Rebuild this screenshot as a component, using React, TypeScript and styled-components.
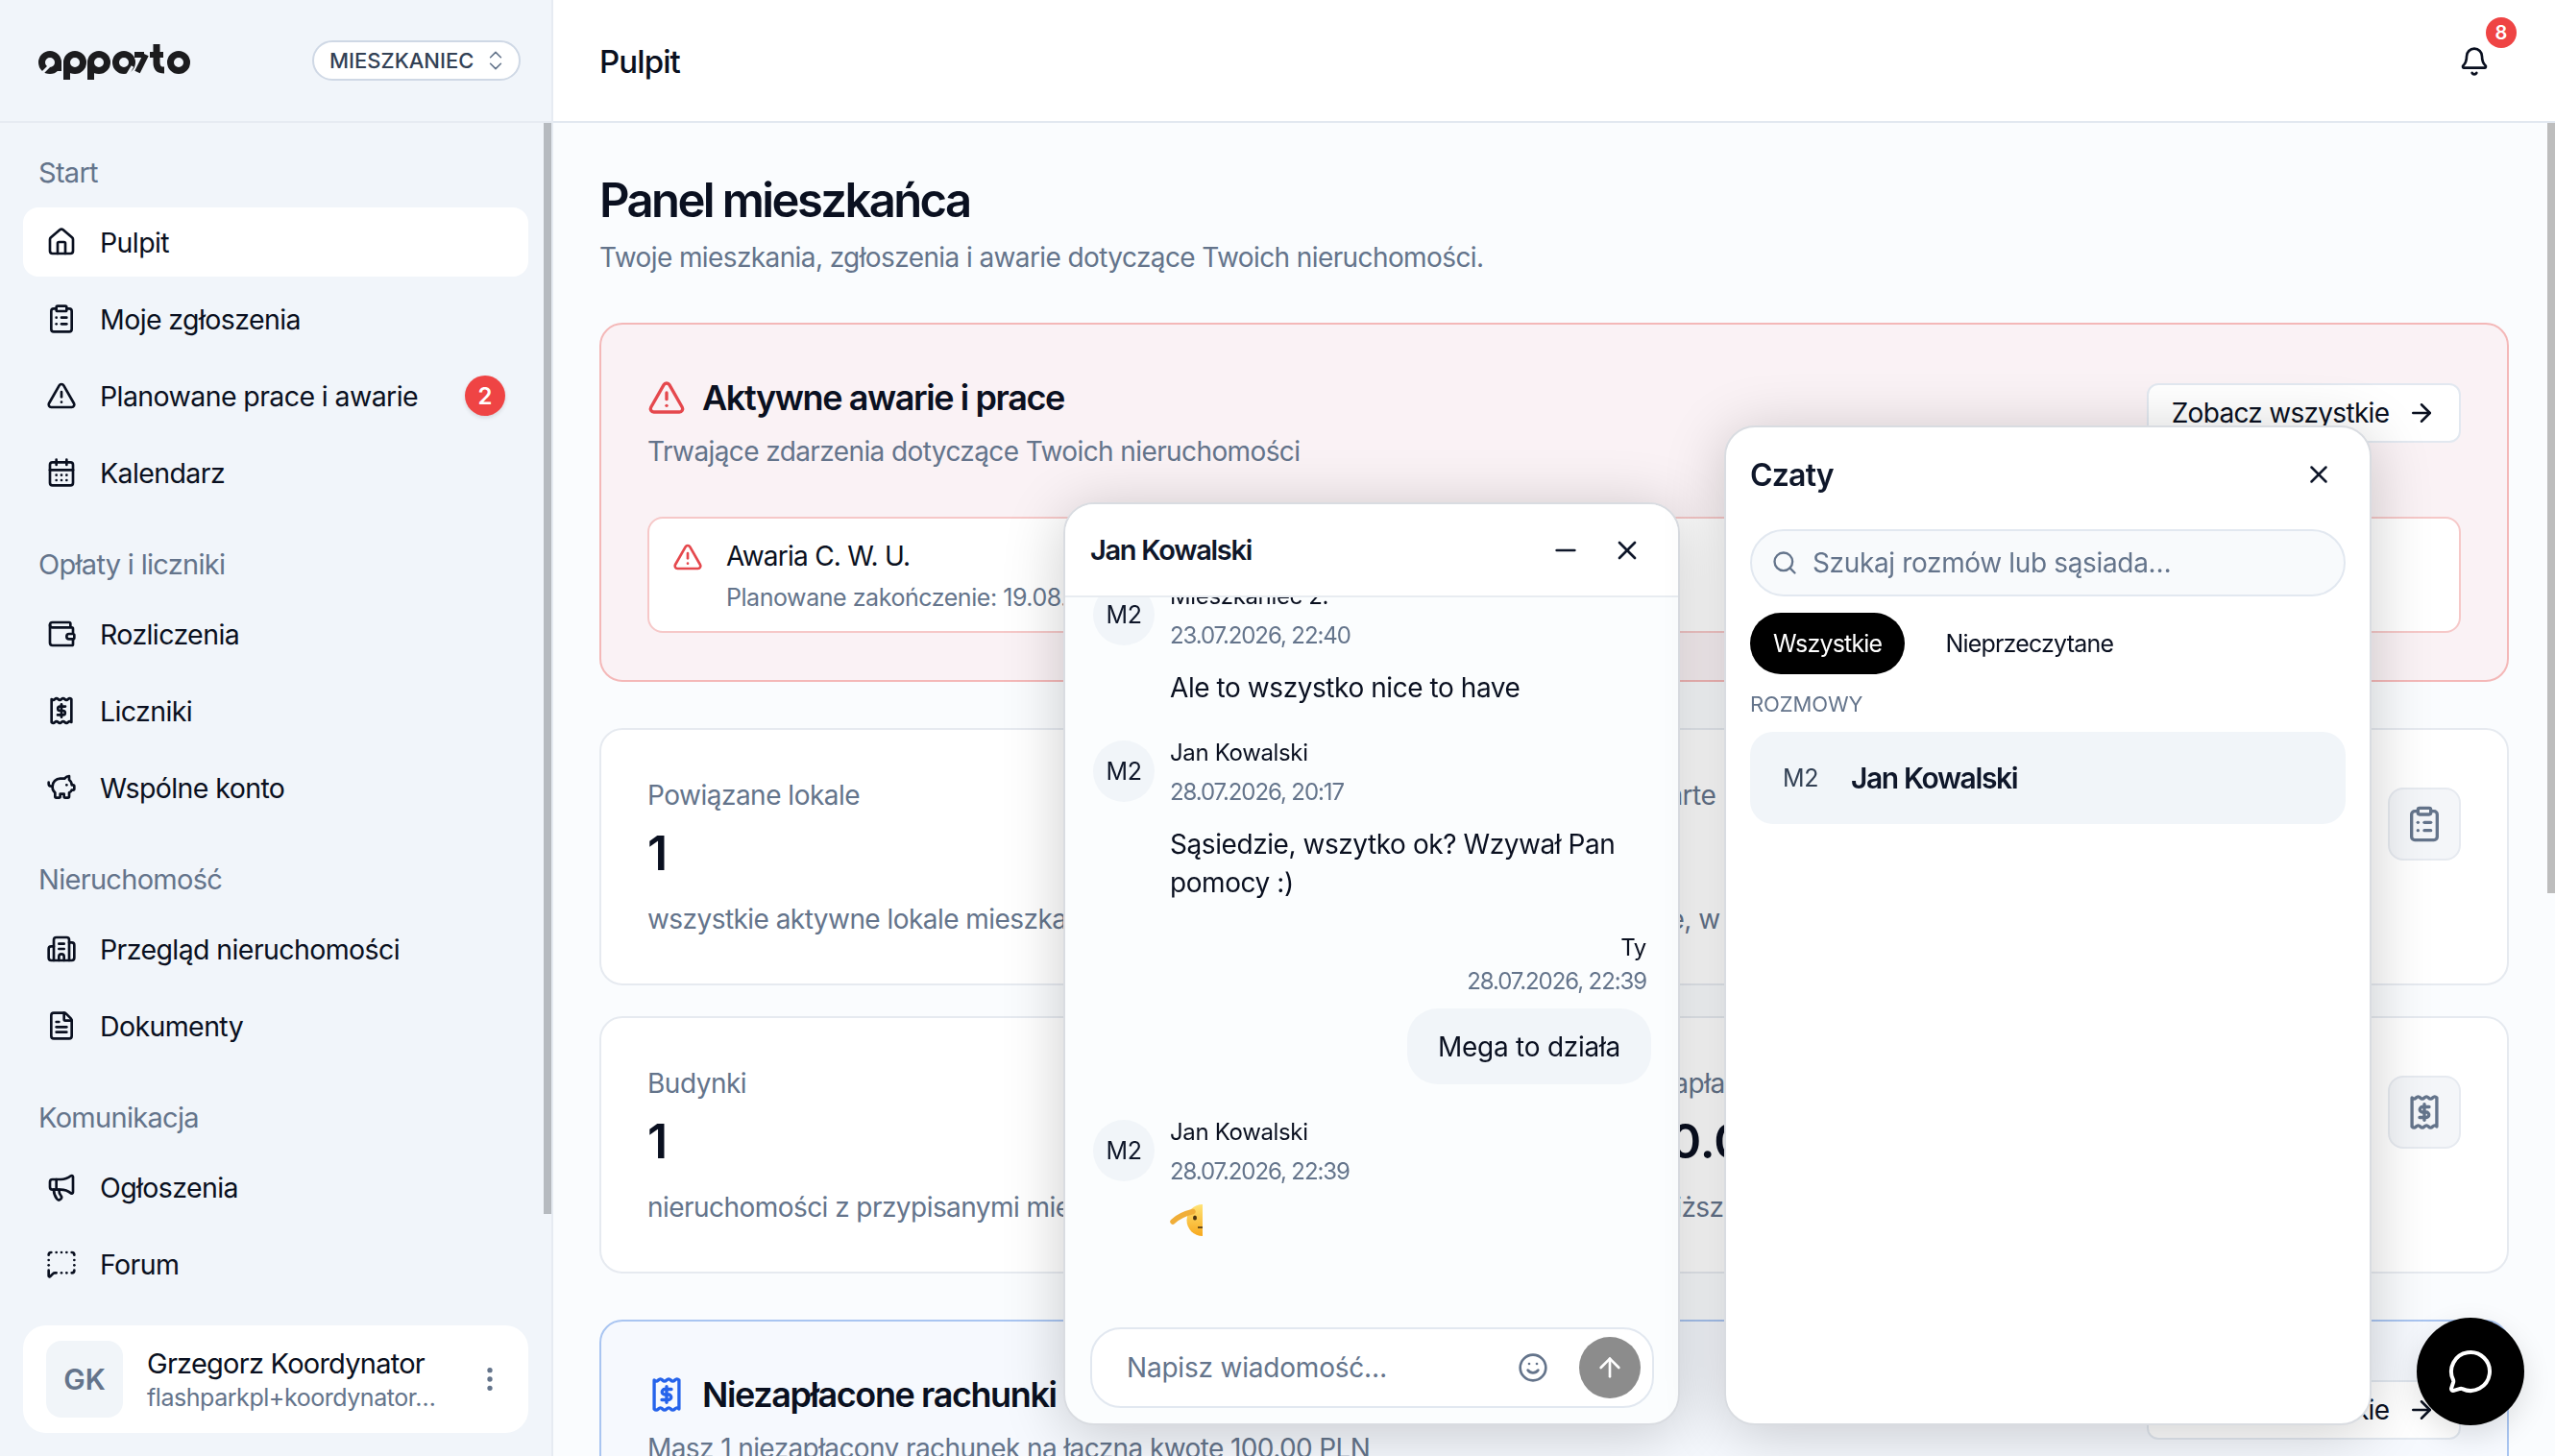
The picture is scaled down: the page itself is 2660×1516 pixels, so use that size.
import styled, { createGlobalStyle } from "styled-components";
import {
  ArrowRight,
  ArrowUp,
  Bell,
  Building2,
  CalendarDays,
  ChevronsUpDown,
  ClipboardList,
  EllipsisVertical,
  FileText,
  House,
  Megaphone,
  MessageCircle,
  MessageSquareDashed,
  Minus,
  PiggyBank,
  Search,
  Smile,
  TriangleAlert,
  Wallet,
  X,
} from "lucide-react";
import type { ReactNode } from "react";

const ink = "#0a1020";
const muted = "#64748b";

const GlobalStyle = createGlobalStyle`
  * { box-sizing: border-box; }
  html, body { margin: 0; padding: 0; height: 100%; }
  body {
    font-family: Inter, "Liberation Sans", sans-serif;
    color: ${ink};
    background: #fafcfe;
    overflow: hidden;
  }
`;

const Shell = styled.div`
  display: grid;
  grid-template-columns: 576px 1fr;
  height: 100vh;
  overflow: hidden;
  position: relative;
`;

/* sidebar */
const Side = styled.aside`
  display: flex;
  flex-direction: column;
  background: #f1f5fa;
  border-right: 2px solid #e6ebf2;
  position: relative;
  min-height: 0;
`;
const SideTop = styled.div`
  height: 128px;
  flex: none;
  display: flex;
  align-items: center;
  justify-content: space-between;
  padding: 0 32px 0 40px;
  border-bottom: 2px solid #e6ebf2;
`;
const LogoBox = styled.div`
  display: flex;
  padding-top: 4px;
`;
const RolePill = styled.button`
  display: flex;
  align-items: center;
  gap: 10px;
  height: 42px;
  width: 217px;
  padding: 0 0 0 16px;
  background: #fff;
  border: 2px solid #cfd8e5;
  border-radius: 21px;
  font: 500 22px Inter, sans-serif;
  letter-spacing: 0;
  color: #334155;
`;
const SideScroll = styled.div`
  position: absolute;
  top: 128px;
  right: 0;
  width: 8px;
  height: 1136px;
  background: #b6babf;
`;
const Nav = styled.nav`
  flex: 1;
  display: flex;
  flex-direction: column;
  gap: 38px;
  padding: 30px 24px 0;
`;
const NavGroup = styled.div`
  display: flex;
  flex-direction: column;
  gap: 8px;
`;
const GroupLabel = styled.div`
  font-size: 29px;
  line-height: 44px;
  color: ${muted};
  padding-left: 16px;
  margin-bottom: 6px;
  letter-spacing: -0.7px;
`;
const NavItem = styled.a<{ $active?: boolean }>`
  display: flex;
  align-items: center;
  gap: 24px;
  height: 72px;
  padding: 0 24px;
  border-radius: 16px;
  font-size: 28.5px;
  letter-spacing: -0.6px;
  background: ${(p) => (p.$active ? "#fff" : "transparent")};
  color: ${ink};
  svg {
    flex: none;
  }
`;
const NavBadge = styled.span`
  margin-left: auto;
  width: 42px;
  height: 42px;
  border-radius: 50%;
  background: #ef4444;
  color: #fff;
  display: flex;
  align-items: center;
  justify-content: center;
  font-size: 24px;
  font-weight: 600;
  letter-spacing: 0;
  box-shadow: 0 2px 4px rgba(0, 0, 0, 0.12);
`;
const UserCard = styled.div`
  flex: none;
  margin: 0 24px 24px;
  height: 112px;
  display: flex;
  align-items: center;
  padding: 0 24px;
  background: #fff;
  border-radius: 24px;
`;
const UserAvatar = styled.div`
  width: 80px;
  height: 80px;
  flex: none;
  border-radius: 16px;
  background: #f1f5f9;
  color: ${muted};
  display: flex;
  align-items: center;
  justify-content: center;
  font-size: 30px;
  font-weight: 600;
`;
const UserText = styled.div`
  margin-left: 25px;
  flex: 1;
  min-width: 0;
`;
const UserName = styled.div`
  font-size: 29px;
  line-height: 38px;
  letter-spacing: -0.75px;
`;
const UserMail = styled.div`
  font-size: 25px;
  line-height: 32px;
  color: ${muted};
  letter-spacing: -0.45px;
`;

/* main column */
const Main = styled.main`
  display: flex;
  flex-direction: column;
  min-width: 0;
  min-height: 0;
  position: relative;
`;
const TopBar = styled.header`
  height: 128px;
  flex: none;
  display: flex;
  align-items: center;
  justify-content: space-between;
  padding: 2px 68px 0 48px;
  background: #fff;
  border-bottom: 2px solid #e2e8f0;
`;
const TopTitle = styled.div`
  font-size: 33px;
  font-weight: 500;
  letter-spacing: -0.9px;
`;
const BellWrap = styled.div`
  position: relative;
  display: flex;
  width: 32px;
  height: 32px;
`;
const BellBadge = styled.span`
  position: absolute;
  top: -30px;
  left: 28px;
  width: 32px;
  height: 32px;
  border-radius: 50%;
  background: #ef4444;
  color: #fff;
  font-size: 20px;
  font-weight: 600;
  display: flex;
  align-items: center;
  justify-content: center;
`;
const PageScroll = styled.div`
  position: absolute;
  top: 128px;
  right: 0;
  width: 8px;
  height: 802px;
  background: #bdbdbd;
`;
const Content = styled.div`
  flex: 1;
  min-height: 0;
  overflow: hidden;
  padding: 49px 48px 0;
`;
const PageTitle = styled.h1`
  margin: 0;
  font-size: 49px;
  line-height: 64px;
  font-weight: 600;
  letter-spacing: -2.6px;
`;
const PageSub = styled.p`
  margin: 5px 0 46px;
  font-size: 28px;
  line-height: 44px;
  color: ${muted};
  letter-spacing: -0.6px;
`;
const Panel = styled.section<{ $tone: "red" | "blue" }>`
  padding: 48px 48px 49px;
  border-radius: 24px;
  border: 2px solid ${(p) => (p.$tone === "red" ? "#f4b8b8" : "#a9c5f1")};
  background: ${(p) => (p.$tone === "red" ? "#faf2f5" : "#f6f9fe")};
  margin-bottom: 48px;
`;
const PanelHead = styled.div`
  display: flex;
  justify-content: space-between;
  align-items: flex-start;
`;
const PanelTitle = styled.h2<{ $tone: "red" | "blue" }>`
  margin: 0;
  display: flex;
  align-items: center;
  gap: 17px;
  font-size: 36px;
  line-height: 56px;
  font-weight: 600;
  letter-spacing: -1.4px;
  svg {
    color: ${(p) => (p.$tone === "red" ? "#e5484d" : "#2563eb")};
    flex: none;
  }
`;
const PanelSub = styled.p`
  margin: 6px 0 0;
  font-size: 28px;
  line-height: 44px;
  color: ${muted};
  letter-spacing: -0.6px;
`;
const LinkButton = styled.button`
  flex: none;
  margin: 13px 0 0;
  height: 62px;
  width: 327px;
  display: flex;
  align-items: center;
  justify-content: center;
  gap: 19px;
  background: #fff;
  border: 2px solid #e2e8f0;
  border-radius: 12px;
  font: 400 28px Inter, sans-serif;
  letter-spacing: -0.7px;
  color: ${ink};
`;
const AlertRow = styled.div`
  margin-top: 46px;
  height: 121px;
  display: flex;
  align-items: flex-start;
  gap: 24px;
  padding: 19px 24px;
  border-radius: 16px;
  border: 2px solid #f6c8c8;
  background: #fff;
  svg {
    margin-top: 5px;
    flex: none;
  }
`;
const AlertName = styled.div`
  font-size: 28px;
  line-height: 40px;
  letter-spacing: -0.75px;
`;
const AlertMeta = styled.div`
  margin-top: 5px;
  font-size: 25px;
  line-height: 36px;
  color: ${muted};
  letter-spacing: -0.45px;
  white-space: nowrap;
`;
const StatGrid = styled.div`
  display: grid;
  grid-template-columns: 1fr 1fr;
  gap: 32px;
  margin-bottom: 48px;
`;
const StatCard = styled.div`
  height: 268px;
  padding: 46px 48px;
  display: flex;
  justify-content: space-between;
  border: 2px solid #e6eaf0;
  border-radius: 24px;
  background: #fff;
`;
const StatText = styled.div`
  min-width: 0;
  white-space: nowrap;
`;
const StatLabel = styled.div`
  font-size: 28px;
  line-height: 44px;
  color: ${muted};
  letter-spacing: -0.5px;
`;
const StatValue = styled.div`
  margin-top: 8px;
  font-size: 50px;
  line-height: 60px;
  font-weight: 600;
`;
const StatNote = styled.div`
  margin-top: 17px;
  font-size: 28px;
  line-height: 44px;
  color: ${muted};
  letter-spacing: -0.55px;
`;
const StatIcon = styled.div`
  flex: none;
  width: 76px;
  height: 76px;
  margin-top: 14px;
  display: flex;
  align-items: center;
  justify-content: center;
  border: 2px solid #e6eaf0;
  border-radius: 16px;
  background: #f4f6f9;
  color: ${muted};
`;

/* floating chat windows */
const ChatWindow = styled.div`
  position: fixed;
  left: 1107px;
  top: 523px;
  width: 642px;
  height: 961px;
  display: flex;
  flex-direction: column;
  overflow: hidden;
  border: 2px solid #d9dce1;
  border-radius: 32px;
  background: #fbfdfe;
  box-shadow: 0 8px 64px rgba(0, 0, 0, 0.2);
`;
const ChatHead = styled.div`
  flex: none;
  height: 97px;
  display: flex;
  align-items: center;
  padding: 0 37px 0 26px;
  background: #fff;
  border-bottom: 2px solid #e8ecf1;
  position: relative;
  z-index: 1;
`;
const ChatName = styled.div`
  flex: 1;
  font-size: 29px;
  font-weight: 600;
  letter-spacing: -1.3px;
  color: #0f172a;
`;
const HeadActions = styled.div`
  display: flex;
  gap: 32px;
  color: #0f172a;
`;
const MessageList = styled.div`
  flex: 1;
  min-height: 0;
  overflow: hidden;
`;
const MessageScroll = styled.div`
  margin-top: -14px;
  padding: 0 28px 0 29px;
  display: flex;
  flex-direction: column;
  gap: 35px;
`;
const Incoming = styled.div`
  display: grid;
  grid-template-columns: 64px 1fr;
  column-gap: 16px;
`;
const Avatar = styled.div`
  width: 64px;
  height: 64px;
  border-radius: 50%;
  background: #f1f5f9;
  display: flex;
  align-items: center;
  justify-content: center;
  font-size: 25px;
  letter-spacing: -0.3px;
  color: #0f172a;
`;
const Sender = styled.div`
  font-size: 24px;
  line-height: 26px;
  letter-spacing: -0.35px;
`;
const Stamp = styled.div`
  margin-top: 12px;
  font-size: 24px;
  line-height: 32px;
  letter-spacing: -1.1px;
  color: ${muted};
`;
const Body = styled.div`
  margin-top: 18px;
  font-size: 28px;
  line-height: 40px;
  letter-spacing: -0.43px;
`;
const Outgoing = styled.div`
  display: flex;
  flex-direction: column;
  align-items: flex-end;
  margin-bottom: 2px;
`;
const OutMeta = styled.div`
  padding-right: 5px;
  text-align: right;
  ${Stamp} {
    margin-top: 6px;
  }
`;
const Bubble = styled.div`
  margin-top: 12px;
  height: 79px;
  padding: 0 32px;
  display: flex;
  align-items: center;
  border-radius: 32px;
  background: #f1f5f9;
  font-size: 28px;
  letter-spacing: -0.25px;
`;
const EmojiLine = styled.div`
  margin-top: 18px;
  height: 33px;
`;
const Composer = styled.div`
  flex: none;
  height: 84px;
  margin: 0 25px 16px 26px;
  display: flex;
  align-items: center;
  padding: 0 12px 0 36px;
  border: 2px solid #e2e8f0;
  border-radius: 32px;
  background: #fff;
`;
const ComposerHint = styled.div`
  flex: 1;
  font-size: 28px;
  letter-spacing: -0.2px;
  color: ${muted};
`;
const SendButton = styled.div`
  margin-left: 32px;
  width: 64px;
  height: 64px;
  border-radius: 50%;
  background: #8c8c8c;
  color: #fff;
  display: flex;
  align-items: center;
  justify-content: center;
`;
const InboxWindow = styled.div`
  position: fixed;
  left: 1795px;
  top: 443px;
  width: 674px;
  height: 1041px;
  display: flex;
  flex-direction: column;
  padding: 0 25px;
  border: 2px solid #d9dce1;
  border-radius: 32px;
  background: #fff;
  box-shadow: 0 8px 64px rgba(0, 0, 0, 0.2);
`;
const InboxHead = styled.div`
  flex: none;
  height: 106px;
  display: flex;
  align-items: center;
  justify-content: space-between;
  padding: 0 13px 8px 0;
`;
const InboxTitle = styled.div`
  font-size: 32px;
  font-weight: 600;
  letter-spacing: -0.8px;
  color: #0f172a;
`;
const SearchBox = styled.div`
  flex: none;
  height: 70px;
  display: flex;
  align-items: center;
  gap: 15px;
  padding: 0 20px;
  border: 2px solid #e2e8f0;
  border-radius: 35px;
  background: #f8fafc;
  color: ${muted};
  font-size: 28px;
  letter-spacing: -0.35px;
`;
const Filters = styled.div`
  flex: none;
  margin-top: 17px;
  display: flex;
  align-items: center;
  gap: 18px;
`;
const Filter = styled.div<{ $on?: boolean }>`
  height: 64px;
  padding: 0 24px;
  display: flex;
  align-items: center;
  border-radius: 32px;
  font-size: 25px;
  letter-spacing: -0.8px;
  background: ${(p) => (p.$on ? "#000" : "transparent")};
  color: ${(p) => (p.$on ? "#fff" : ink)};
`;
const ListCaption = styled.div`
  margin-top: 16px;
  font-size: 22px;
  line-height: 30px;
  color: ${muted};
  letter-spacing: -0.1px;
`;
const Conversation = styled.div`
  flex: none;
  margin-top: 14px;
  height: 96px;
  display: flex;
  align-items: center;
  gap: 34px;
  padding: 0 34px;
  border-radius: 24px;
  background: #f1f5f9;
`;
const ConvTag = styled.span`
  font-size: 25px;
  color: #334155;
  letter-spacing: -0.4px;
`;
const ConvName = styled.span`
  font-size: 30px;
  font-weight: 600;
  letter-spacing: -1.4px;
  color: #0f172a;
`;
const ChatFab = styled.div`
  position: fixed;
  left: 2516px;
  top: 1372px;
  width: 112px;
  height: 112px;
  border-radius: 50%;
  background: #000;
  color: #fff;
  display: flex;
  align-items: center;
  justify-content: center;
  box-shadow: 0 10px 30px rgba(0, 0, 0, 0.12);
`;

/* hand drawn pictures */
const ReceiptIcon = ({ size = 32 }: { size?: number }) => (
  <svg width={size} height={size} viewBox="0 0 24 24" fill="none" stroke="currentColor" strokeWidth="2" strokeLinecap="round" strokeLinejoin="round">
    <path d="M4.25 3q1.29 1.3 2.58 0t2.58 0 2.58 0 2.58 0 2.58 0 2.6 0V21q-1.29-1.3-2.58 0t-2.58 0-2.58 0-2.58 0-2.58 0-2.6 0Z" />
    <path d="M15 8.7h-4.2a1.65 1.65 0 0 0 0 3.3h2.4a1.65 1.65 0 0 1 0 3.3H9" />
    <path d="M12 7v10" />
  </svg>
);

const LogoMark = () => (
  <svg width="160" height="40" viewBox="0 0 160 40" fill="none" stroke="#1c1c1e" strokeWidth="7" aria-label="apparto">
    <circle cx="12" cy="20" r="8.5" />
    <path d="M20.5 20v9" />
    <circle cx="38" cy="20" r="8.5" />
    <path d="M29.5 20v18" />
    <circle cx="63" cy="20" r="8.5" />
    <path d="M54.5 20v18" />
    <circle cx="89" cy="20" r="8.5" />
    <path d="M103 30 112 12" strokeWidth="6" />
    <path d="M98 24l-6 10" stroke="#f1f5fa" strokeWidth="3" />
    <path d="M100 12h10" strokeWidth="6" />
    <path d="M123 1v19c0 6 3 8 8 8" />
    <path d="M116 12h14" strokeWidth="6" />
    <circle cx="146" cy="20" r="8.5" />
    <path d="M4 31l7-7" stroke="#f1f5fa" strokeWidth="3" />
  </svg>
);

const SaluteEmoji = () => (
  <svg width="34" height="33" viewBox="0 0 34 33">
    <defs>
      <linearGradient id="saluteFace" x1="0" y1="0" x2="0" y2="1">
        <stop offset="0" stopColor="#ffe375" />
        <stop offset="1" stopColor="#f7a91e" />
      </linearGradient>
    </defs>
    <path d="M34 0a16.5 16.5 0 0 0 0 33Z" fill="url(#saluteFace)" />
    <path d="M3 18C8 13 14 10 24 7.5" stroke="#f0ae38" strokeWidth="5.5" strokeLinecap="round" fill="none" />
    <ellipse cx="26" cy="14" rx="2" ry="2.6" fill="#4a3310" />
    <path d="M29 24h5" stroke="#4a3310" strokeWidth="1.6" />
  </svg>
);

const Section = ({ label, children }: { label: string; children: ReactNode }) => (
  <NavGroup>
    <GroupLabel>{label}</GroupLabel>
    {children}
  </NavGroup>
);

export default function App() {
  return (
    <Shell>
      <GlobalStyle />
      <Side>
        <SideTop>
          <LogoBox><LogoMark /></LogoBox>
          <RolePill>
            MIESZKANIEC
            <ChevronsUpDown size={26} strokeWidth={1.5} color="#64748b" />
          </RolePill>
        </SideTop>
        <SideScroll />
        <Nav>
          <Section label="Start">
            <NavItem $active><House size={32} />Pulpit</NavItem>
            <NavItem><ClipboardList size={32} />Moje zgłoszenia</NavItem>
            <NavItem><TriangleAlert size={32} />Planowane prace i awarie<NavBadge>2</NavBadge></NavItem>
            <NavItem><CalendarDays size={32} />Kalendarz</NavItem>
          </Section>
          <Section label="Opłaty i liczniki">
            <NavItem><Wallet size={32} />Rozliczenia</NavItem>
            <NavItem><ReceiptIcon />Liczniki</NavItem>
            <NavItem><PiggyBank size={32} />Wspólne konto</NavItem>
          </Section>
          <Section label="Nieruchomość">
            <NavItem><Building2 size={32} />Przegląd nieruchomości</NavItem>
            <NavItem><FileText size={32} />Dokumenty</NavItem>
          </Section>
          <Section label="Komunikacja">
            <NavItem><Megaphone size={32} />Ogłoszenia</NavItem>
            <NavItem><MessageSquareDashed size={32} />Forum</NavItem>
          </Section>
        </Nav>
        <UserCard>
          <UserAvatar>GK</UserAvatar>
          <UserText>
            <UserName>Grzegorz Koordynator</UserName>
            <UserMail>flashparkpl+koordynator…</UserMail>
          </UserText>
          <EllipsisVertical size={32} color={muted} />
        </UserCard>
      </Side>

      <Main>
        <TopBar>
          <TopTitle>Pulpit</TopTitle>
          <BellWrap>
            <Bell size={32} />
            <BellBadge>8</BellBadge>
          </BellWrap>
        </TopBar>
        <PageScroll />
        <Content>
          <PageTitle>Panel mieszkańca</PageTitle>
          <PageSub>Twoje mieszkania, zgłoszenia i awarie dotyczące Twoich nieruchomości.</PageSub>

          <Panel $tone="red">
            <PanelHead>
              <div>
                <PanelTitle $tone="red"><TriangleAlert size={40} />Aktywne awarie i prace</PanelTitle>
                <PanelSub>Trwające zdarzenia dotyczące Twoich nieruchomości</PanelSub>
              </div>
              <LinkButton>Zobacz wszystkie<ArrowRight size={30} /></LinkButton>
            </PanelHead>
            <AlertRow>
              <TriangleAlert size={32} color="#e5484d" />
              <div>
                <AlertName>Awaria C. W. U.</AlertName>
                <AlertMeta>Planowane zakończenie: 19.08.2026</AlertMeta>
              </div>
            </AlertRow>
          </Panel>

          <StatGrid>
            <StatCard>
              <StatText>
                <StatLabel>Powiązane lokale</StatLabel>
                <StatValue>1</StatValue>
                <StatNote>wszystkie aktywne lokale mieszkalne</StatNote>
              </StatText>
              <StatIcon><Building2 size={40} /></StatIcon>
            </StatCard>
            <StatCard>
              <StatText>
                <StatLabel>Otwarte</StatLabel>
                <StatValue>1</StatValue>
                <StatNote>nowe, w trakcie</StatNote>
              </StatText>
              <StatIcon><ClipboardList size={40} /></StatIcon>
            </StatCard>
            <StatCard>
              <StatText>
                <StatLabel>Budynki</StatLabel>
                <StatValue>1</StatValue>
                <StatNote>nieruchomości z przypisanymi mieszkaniami</StatNote>
              </StatText>
              <StatIcon><Building2 size={40} /></StatIcon>
            </StatCard>
            <StatCard>
              <StatText>
                <StatLabel>Do zapłaty</StatLabel>
                <StatValue>100.00 PLN</StatValue>
                <StatNote>najbliższy termin</StatNote>
              </StatText>
              <StatIcon><ReceiptIcon size={40} /></StatIcon>
            </StatCard>
          </StatGrid>

          <Panel $tone="blue">
            <PanelHead>
              <div>
                <PanelTitle $tone="blue"><ReceiptIcon size={40} />Niezapłacone rachunki</PanelTitle>
                <PanelSub>Masz 1 niezapłacony rachunek na łączną kwotę 100.00 PLN</PanelSub>
              </div>
              <LinkButton>Zobacz wszystkie<ArrowRight size={30} /></LinkButton>
            </PanelHead>
          </Panel>
        </Content>
      </Main>

      <ChatWindow>
        <ChatHead>
          <ChatName>Jan Kowalski</ChatName>
          <HeadActions><Minus size={32} /><X size={32} /></HeadActions>
        </ChatHead>
        <MessageList>
          <MessageScroll>
            <Incoming>
              <Avatar>M2</Avatar>
              <div>
                <Sender>Mieszkaniec 2.</Sender>
                <Stamp>23.07.2026, 22:40</Stamp>
                <Body>Ale to wszystko nice to have</Body>
              </div>
            </Incoming>
            <Incoming>
              <Avatar>M2</Avatar>
              <div>
                <Sender>Jan Kowalski</Sender>
                <Stamp>28.07.2026, 20:17</Stamp>
                <Body>Sąsiedzie, wszytko ok? Wzywał Pan<br />pomocy :)</Body>
              </div>
            </Incoming>
            <Outgoing>
              <OutMeta>
                <Sender>Ty</Sender>
                <Stamp>28.07.2026, 22:39</Stamp>
              </OutMeta>
              <Bubble>Mega to działa</Bubble>
            </Outgoing>
            <Incoming>
              <Avatar>M2</Avatar>
              <div>
                <Sender>Jan Kowalski</Sender>
                <Stamp>28.07.2026, 22:39</Stamp>
                <EmojiLine><SaluteEmoji /></EmojiLine>
              </div>
            </Incoming>
          </MessageScroll>
        </MessageList>
        <Composer>
          <ComposerHint>Napisz wiadomość…</ComposerHint>
          <Smile size={32} color={muted} />
          <SendButton><ArrowUp size={32} /></SendButton>
        </Composer>
      </ChatWindow>

      <InboxWindow>
        <InboxHead>
          <InboxTitle>Czaty</InboxTitle>
          <X size={30} color="#0f172a" />
        </InboxHead>
        <SearchBox><Search size={28} />Szukaj rozmów lub sąsiada…</SearchBox>
        <Filters>
          <Filter $on>Wszystkie</Filter>
          <Filter>Nieprzeczytane</Filter>
        </Filters>
        <ListCaption>ROZMOWY</ListCaption>
        <Conversation>
          <ConvTag>M2</ConvTag>
          <ConvName>Jan Kowalski</ConvName>
        </Conversation>
      </InboxWindow>

      <ChatFab><MessageCircle size={48} /></ChatFab>
    </Shell>
  );
}
